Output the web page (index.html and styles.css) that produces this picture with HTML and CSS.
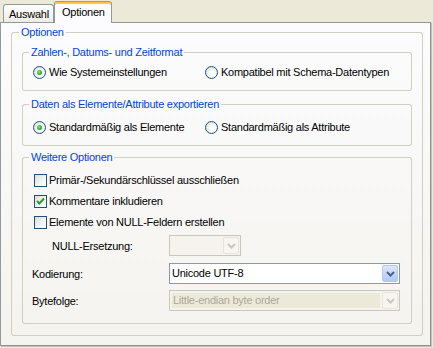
FILE: index.html
```html
<!DOCTYPE html>
<html>
<head>
<meta charset="utf-8">
<link rel="stylesheet" href="styles.css">
</head>
<body>
<div class="dialog">
  <div class="tabs">
    <div class="tab">Auswahl</div>
    <div class="tab active">Optionen</div>
  </div>
  <div class="panel">
    <section class="group outer">
      <div class="ghead"><span>Optionen</span></div>
      <div class="gbody outer-body">
        <section class="group g1">
          <div class="ghead"><span>Zahlen-, Datums- und Zeitformat</span></div>
          <div class="gbody radios r1">
            <label class="opt"><span class="radio on"></span>Wie Systemeinstellungen</label>
            <label class="opt"><span class="radio"></span>Kompatibel mit Schema-Datentypen</label>
          </div>
        </section>
        <section class="group g2">
          <div class="ghead"><span>Daten als Elemente/Attribute exportieren</span></div>
          <div class="gbody radios r2">
            <label class="opt"><span class="radio on"></span>Standardmäßig als Elemente</label>
            <label class="opt"><span class="radio"></span>Standardmäßig als Attribute</label>
          </div>
        </section>
        <section class="group g3">
          <div class="ghead"><span>Weitere Optionen</span></div>
          <div class="gbody more">
            <label class="check"><span class="box"></span>Primär-/Sekundärschlüssel ausschließen</label>
            <label class="check"><span class="box"><svg width="11" height="11" viewBox="0 0 11 11"><path d="M2 5 L4.3 7.5 L9 2.5" fill="none" stroke="#21A121" stroke-width="2"/></svg></span>Kommentare inkludieren</label>
            <label class="check last"><span class="box"></span>Elemente von NULL-Feldern erstellen</label>
            <div class="field f-null">
              <span class="flabel indent">NULL-Ersetzung:</span>
              <div class="combo small disabled">
                <span class="value"></span>
                <span class="btn"><svg width="9" height="6" viewBox="0 0 9 6"><path d="M1 1 L4.5 4.5 L8 1" fill="none" stroke="#C9C7BA" stroke-width="2"/></svg></span>
              </div>
            </div>
            <div class="field f-enc">
              <span class="flabel">Kodierung:</span>
              <div class="combo wide">
                <span class="value">Unicode UTF-8</span>
                <span class="btn"><svg width="9" height="6" viewBox="0 0 9 6"><path d="M1 1 L4.5 4.5 L8 1" fill="none" stroke="#4D6185" stroke-width="2"/></svg></span>
              </div>
            </div>
            <div class="field f-byte">
              <span class="flabel">Bytefolge:</span>
              <div class="combo wide disabled">
                <span class="value sel">Little-endian byte order</span>
                <span class="btn"><svg width="9" height="6" viewBox="0 0 9 6"><path d="M1 1 L4.5 4.5 L8 1" fill="none" stroke="#C9C7BA" stroke-width="2"/></svg></span>
              </div>
            </div>
          </div>
        </section>
      </div>
    </section>
  </div>
</div>
</body>
</html>
```
FILE: styles.css
```css
* { box-sizing: border-box; }
html, body { margin: 0; padding: 0; }
body {
  width: 433px;
  height: 348px;
  overflow: hidden;
  background: #ECE9D8;
  font-family: "Liberation Sans", Arial, sans-serif;
  font-size: 11px;
  letter-spacing: -0.25px;
  color: #000;
}
.tabs {
  display: flex;
  align-items: flex-start;
  height: 22px;
  padding-left: 3px;
  position: relative;
  z-index: 2;
}
.tab {
  margin-top: 4px;
  width: 51px;
  height: 18px;
  border: 1px solid #919B9C;
  border-bottom: none;
  border-radius: 3px 3px 0 0;
  background: linear-gradient(#FFFFFF, #ECEBE6);
  padding: 3px 0 0 5px;
  line-height: 13px;
  white-space: nowrap;
}
.tab.active {
  margin-top: 1px;
  width: 58px;
  height: 22px;
  background: #FCFCFE;
  border-top: 1px solid #E68B2C;
  box-shadow: inset 0 2px 0 #FFC73C;
  padding: 4px 0 0 7px;
}
.panel {
  width: 431px;
  height: 324px;
  border: 1px solid #919B9C;
  border-right-color: #8C9494;
  border-bottom-color: #8C9494;
  box-shadow: 1px 1px 0 #C5C2B2;
  background: linear-gradient(#FCFCFE, #F4F3EE);
  padding: 2px 0 0 10px;
}

/* group boxes */
.ghead {
  display: flex;
  height: 14px;
}
.ghead::before,
.ghead::after {
  content: "";
  margin-top: 7px;
  height: 7px;
  border-top: 1px solid #D0D0BF;
}
.ghead::before {
  width: 6px;
  border-left: 1px solid #D0D0BF;
  border-top-left-radius: 3px;
}
.ghead::after {
  flex: 1;
  border-right: 1px solid #D0D0BF;
  border-top-right-radius: 3px;
}
.ghead span {
  padding: 0 2px;
  line-height: 14px;
  color: #0046D5;
  white-space: nowrap;
}
.gbody {
  border: 1px solid #D0D0BF;
  border-top: none;
  border-radius: 0 0 3px 3px;
}
.outer { width: 412px; }
.outer > .ghead::before { width: 7px; }
.outer-body { padding: 6px 10px 11px 10px; }
.g2 { margin-top: 6px; }
.g3 { margin-top: 4px; }

.radios { display: flex; align-items: center; padding-left: 10px; }
.r1 { height: 32px; padding-top: 6px; padding-bottom: 11px; }
.r2 { height: 35px; padding-top: 9px; padding-bottom: 11px; }
.opt { display: flex; align-items: center; gap: 3px; width: 172px; height: 14px; white-space: nowrap; }
.radio {
  width: 13px; height: 13px;
  border-radius: 50%;
  border: 1px solid #1C5180;
  background: radial-gradient(circle at 60% 60%, #FFFFFF 20%, #E6E5DE 70%, #D4D2C8 100%);
  display: flex; align-items: center; justify-content: center;
  flex: none;
}
.radio.on::after {
  content: "";
  width: 5px; height: 5px; border-radius: 50%;
  background: radial-gradient(circle at 40% 40%, #8CF08C 0%, #2DB52D 50%, #1E961E 100%);
}

.more {
  display: flex;
  flex-direction: column;
  padding: 9px 11px 12px 9px;
}
.check {
  display: flex; align-items: center; gap: 2px;
  height: 14px;
  margin-left: 2px;
  margin-bottom: 7px;
  white-space: nowrap;
}
.check.last { margin-bottom: 6px; }
.box {
  width: 13px; height: 13px;
  border: 1px solid #1C5180;
  background: linear-gradient(135deg, #DCDCD7 0%, #F5F5F2 60%, #FFFFFF 100%);
  display: flex; align-items: center; justify-content: center;
  flex: none;
}
.box svg { display: block; }
.field { display: flex; align-items: center; height: 21px; }
.f-null { margin-bottom: 7px; }
.f-enc { margin-bottom: 6px; }
.flabel { width: 137px; flex: none; white-space: nowrap; }
.flabel.indent { padding-left: 20px; }
.combo {
  height: 21px;
  border: 1px solid #7F9DB9;
  background: #FFFFFF;
  display: flex;
  align-items: center;
  padding: 1px 1px 1px 2px;
}
.combo.small { width: 72px; }
.combo.wide { width: 231px; }
.combo .value { flex: 1; line-height: 15px; height: 15px; white-space: nowrap; }
.combo .btn {
  width: 16px; height: 17px;
  border: 1px solid #B5C8F3;
  border-radius: 2px;
  background: linear-gradient(#DDE7FD 0%, #C6D6F8 50%, #B4C8F4 100%);
  display: flex; align-items: center; justify-content: center;
  flex: none;
}
.combo .btn svg { display: block; }
.combo.disabled { border-color: #C9C7BA; background: #F4F3EE; }
.combo.disabled .btn { background: #F6F5F0; border-color: #E6E4DA; }
.combo .value.sel { background: #ECE9D8; color: #ACA899; margin-right: 2px; padding-left: 1px; }
```
